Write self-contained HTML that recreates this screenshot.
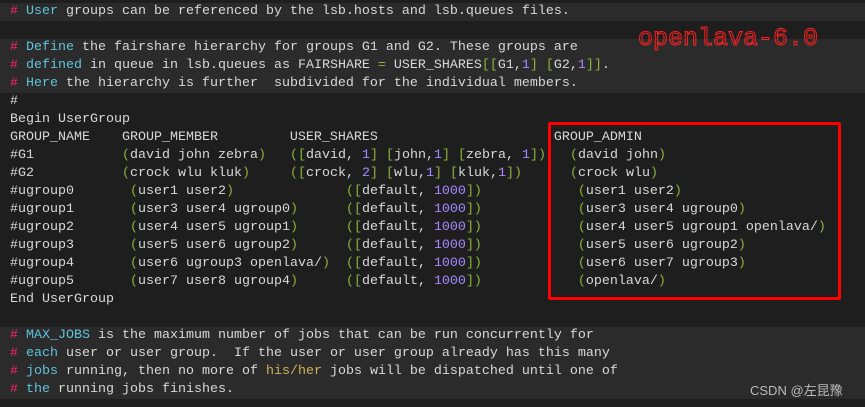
<!DOCTYPE html>
<html><head><meta charset="utf-8">
<style>
html,body{margin:0;padding:0;background:#1e1e1e;width:865px;height:407px;overflow:hidden;position:relative}
pre{margin:0;position:absolute;left:0;top:3px;font-family:"Liberation Mono",monospace;font-size:13.33px;line-height:18px;color:#d8d8d8;width:865px}
.l{padding-left:10px;height:18px;white-space:pre}
.c{background:#2b2b2b}
.h{color:#f92672}.k{color:#5fc3dc}.g{color:#8cb33a}.n{color:#a58aff}.y{color:#c9b458}
.box{position:absolute;left:548px;top:122px;width:287px;height:172px;border:3px solid #f00;border-radius:2px}
.ol{position:absolute;left:638px;top:24px;font-family:"Liberation Mono",monospace;font-size:25px;color:transparent;-webkit-text-stroke:1px #ff2020;letter-spacing:0}
.wm{position:absolute;left:750px;top:380px;font-family:"Liberation Sans","Noto Sans CJK SC",sans-serif;font-size:13px;color:#bbb}
</style></head><body>
<pre><div class="l c"><span class="h">#</span> <span class="k">User</span> groups can be referenced by the lsb.hosts and lsb.queues files.</div><div class="l"></div><div class="l c"><span class="h">#</span> <span class="k">Define</span> the fairshare hierarchy for groups G1 and G2. These groups are</div><div class="l c"><span class="h">#</span> <span class="k">defined</span> in queue in lsb.queues as FAIRSHARE <span class="g">=</span> USER_SHARES<span class="g">[[</span>G1,<span class="n">1</span><span class="g">]</span> <span class="g">[</span>G2,<span class="n">1</span><span class="g">]]</span>.</div><div class="l c"><span class="h">#</span> <span class="k">Here</span> the hierarchy is further  subdivided for the individual members.</div><div class="l">#</div><div class="l">Begin UserGroup</div><div class="l">GROUP_NAME    GROUP_MEMBER         USER_SHARES                      GROUP_ADMIN</div><div class="l">#G1           <span class="g">(</span>david john zebra<span class="g">)</span>   <span class="g">([</span>david, <span class="n">1</span><span class="g">]</span> <span class="g">[</span>john,<span class="n">1</span><span class="g">]</span> <span class="g">[</span>zebra, <span class="n">1</span><span class="g">])</span>   <span class="g">(</span>david john<span class="g">)</span></div><div class="l">#G2           <span class="g">(</span>crock wlu kluk<span class="g">)</span>     <span class="g">([</span>crock, <span class="n">2</span><span class="g">]</span> <span class="g">[</span>wlu,<span class="n">1</span><span class="g">]</span> <span class="g">[</span>kluk,<span class="n">1</span><span class="g">])</span>      <span class="g">(</span>crock wlu<span class="g">)</span></div><div class="l">#ugroup0       <span class="g">(</span>user1 user2<span class="g">)</span>              <span class="g">([</span>default, <span class="n">1000</span><span class="g">])</span>            <span class="g">(</span>user1 user2<span class="g">)</span></div><div class="l">#ugroup1       <span class="g">(</span>user3 user4 ugroup0<span class="g">)</span>      <span class="g">([</span>default, <span class="n">1000</span><span class="g">])</span>            <span class="g">(</span>user3 user4 ugroup0<span class="g">)</span></div><div class="l">#ugroup2       <span class="g">(</span>user4 user5 ugroup1<span class="g">)</span>      <span class="g">([</span>default, <span class="n">1000</span><span class="g">])</span>            <span class="g">(</span>user4 user5 ugroup1 openlava/<span class="g">)</span></div><div class="l">#ugroup3       <span class="g">(</span>user5 user6 ugroup2<span class="g">)</span>      <span class="g">([</span>default, <span class="n">1000</span><span class="g">])</span>            <span class="g">(</span>user5 user6 ugroup2<span class="g">)</span></div><div class="l">#ugroup4       <span class="g">(</span>user6 ugroup3 openlava/<span class="g">)</span>  <span class="g">([</span>default, <span class="n">1000</span><span class="g">])</span>            <span class="g">(</span>user6 user7 ugroup3<span class="g">)</span></div><div class="l">#ugroup5       <span class="g">(</span>user7 user8 ugroup4<span class="g">)</span>      <span class="g">([</span>default, <span class="n">1000</span><span class="g">])</span>            <span class="g">(</span>openlava/<span class="g">)</span></div><div class="l">End UserGroup</div><div class="l"></div><div class="l c"><span class="h">#</span> <span class="k">MAX_JOBS</span> is the maximum number of jobs that can be run concurrently for</div><div class="l c"><span class="h">#</span> <span class="k">each</span> user or user group.  If the user or user group already has this many</div><div class="l c"><span class="h">#</span> <span class="k">jobs</span> running, then no more of <span class="y">his/her</span> jobs will be dispatched until one of</div><div class="l c"><span class="h">#</span> <span class="k">the</span> running jobs finishes.</div></pre>
<div class="box"></div>
<div class="ol">openlava-6.0</div>
<div class="wm">CSDN @左昆豫</div>
</body></html>
